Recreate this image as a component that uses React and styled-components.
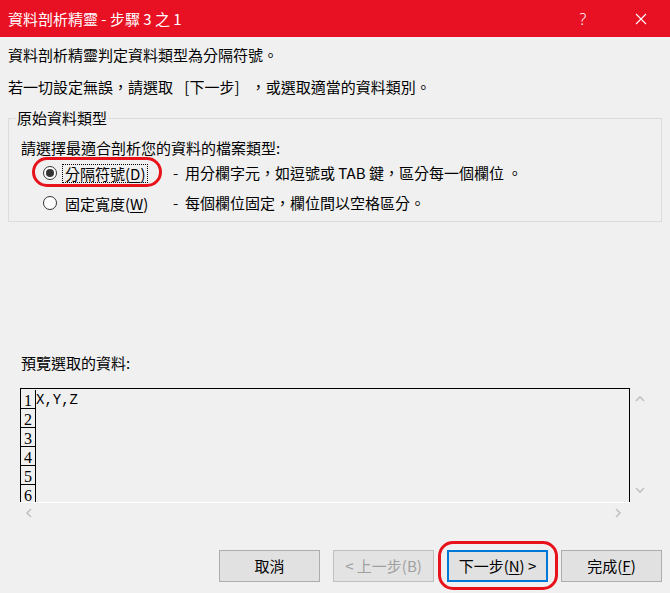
import React from 'react'
import styled, { createGlobalStyle, css } from 'styled-components'

const GlobalStyle = createGlobalStyle`
    html, body {
        margin: 0;
        padding: 0;
        background: #f0f0f0;
    }
    body {
        font-family: "Noto Sans CJK TC", "Noto Sans", sans-serif;
        font-size: 15px;
        color: #000;
        overflow: hidden;
    }
`;

const Window = styled.div`
    width: 670px;
    height: 593px;
    display: flex;
    flex-direction: column;
    background: #f0f0f0;
    overflow: hidden;
`;

const TitleBar = styled.div`
    height: 37px;
    flex-shrink: 0;
    display: flex;
    align-items: center;
    background: #e81123;
    color: #fff;
    padding-left: 8px;
`;

const Title = styled.span`
    flex: 1;
    line-height: 20px;
    white-space: pre;
`;

const TitleButton = styled.div`
    width: 58px;
    height: 37px;
    display: flex;
    align-items: center;
    justify-content: center;
    font-family: "Noto Sans", sans-serif;
    font-weight: 300;
    font-size: 16px;
`;

const Content = styled.div`
    flex: 1;
    display: flex;
    flex-direction: column;
    padding: 8px 8px 11px 8px;
`;

const Line = styled.p`
    margin: 0 0 12px;
    line-height: 20px;
    white-space: pre;
    word-spacing: ${p => p.wide ? '8px' : '0'};
`;

const Group = styled.fieldset`
    margin: -1px 0 0 0;
    padding: 10px 0 3px 0;
    border: 1px solid #dcdcdc;
    min-width: 0;
`;

const Legend = styled.legend`
    margin-left: 7px;
    padding: 0 1px;
    line-height: 20px;
`;

const Prompt = styled.div`
    padding-left: 12px;
    line-height: 20px;
`;

const RadioRow = styled.div`
    position: relative;
    display: flex;
    align-items: center;
    height: 30px;
    padding-left: 34px;
`;

const RadioCircle = styled.span`
    width: 14px;
    height: 14px;
    box-sizing: border-box;
    border-radius: 50%;
    border: 1px solid #333;
    background: #fff;
    display: flex;
    align-items: center;
    justify-content: center;
    flex-shrink: 0;

    &::after {
        content: '';
        width: 8px;
        height: 8px;
        border-radius: 50%;
        background: ${p => p.checked ? '#333' : 'transparent'};
    }
`;

const LabelCell = styled.div`
    width: 111px;
    margin-left: 5px;
    flex-shrink: 0;
`;

const LabelText = styled.span`
    display: inline-block;
    padding: 0 2px;
    line-height: 17px;
    border: 1px ${p => p.focused ? 'dotted #000' : 'solid transparent'};
`;

const Desc = styled.span`
    white-space: pre;
    line-height: 20px;
`;

const Mark = styled.u`
    text-decoration: underline;
    text-underline-offset: 2px;
`;

const RedRing = styled.div`
    position: absolute;
    left: ${p => p.left}px;
    top: ${p => p.top}px;
    width: ${p => p.width}px;
    height: ${p => p.height}px;
    box-sizing: border-box;
    border: 3px solid #e8121d;
    border-radius: 15px;
    pointer-events: none;
`;

const PreviewLabel = styled.div`
    margin-top: 131px;
    padding-left: 13px;
    line-height: 20px;
`;

const Preview = styled.div`
    margin: 15px 0 0 12px;
    display: grid;
    grid-template-columns: 610px 20px;
    grid-template-rows: 114px 20px;
`;

const ListBox = styled.div`
    box-sizing: border-box;
    border: 1px solid #000;
    border-bottom: none;
    padding-top: 1px;
    overflow: hidden;
`;

const DataRow = styled.div`
    display: flex;
    height: 19px;
`;

const RowNumber = styled.div`
    width: 14px;
    flex-shrink: 0;
    border-right: 1px solid #000;
    border-bottom: 1px solid #000;
    height: 18px;
    font-family: "Liberation Serif", serif;
    font-size: 16px;
    line-height: 21px;
    text-align: center;
    overflow: hidden;
`;

const RowData = styled.div`
    font-family: "Liberation Mono", monospace;
    font-size: 14px;
    line-height: 19px;
    padding-top: 1px;
`;

const VScroll = styled.div`
    display: flex;
    flex-direction: column;
    align-items: center;
    justify-content: space-between;
    padding: 7px 0 8px;
`;

const HScroll = styled.div`
    border-top: 1px solid #fff;
    display: flex;
    align-items: center;
    justify-content: space-between;
    padding: 0 8px 0 5px;
`;

const ButtonRow = styled.div`
    margin-top: auto;
    display: flex;
    justify-content: flex-end;
    gap: 13px;
`;

const ButtonWrap = styled.div`
    position: relative;
`;

const Button = styled.div`
    width: 101px;
    height: 32px;
    box-sizing: border-box;
    display: flex;
    align-items: center;
    justify-content: center;
    background: #e1e1e1;
    border: 1px solid #adadad;
    line-height: 20px;
    white-space: pre;

    ${p => p.disabled && css`
        color: #a0a0a0;
        border-color: #bfbfbf;
        background: #e3e3e3;
    `}

    ${p => p.primary && css`
        border: 2px solid #0078d7;
    `}
`;

const Chevron = ({ dir }) => {
    const pts = {
        up: '1,6 5,2 9,6',
        down: '1,2 5,6 9,2',
        left: '6,1 2,5 6,9',
        right: '2,1 6,5 2,9',
    }[dir];
    const vertical = dir === 'up' || dir === 'down';
    return (
        <svg width={vertical ? 10 : 8} height={vertical ? 8 : 10} viewBox={vertical ? '0 0 10 8' : '0 0 8 10'}>
            <polyline points={pts} fill="none" stroke="#c2c2c2" strokeWidth="1.6" />
        </svg>
    )
}

function App() {
    return (
        <Window>
            <GlobalStyle />
            <TitleBar>
                <Title>資料剖析精靈 - 步驟 3 之 1</Title>
                <TitleButton>?</TitleButton>
                <TitleButton>
                    <svg width="12" height="12" viewBox="0 0 12 12">
                        <path d="M1 1 L11 11 M11 1 L1 11" stroke="#fff" strokeWidth="1.1" />
                    </svg>
                </TitleButton>
            </TitleBar>
            <Content>
                <Line>資料剖析精靈判定資料類型為分隔符號。</Line>
                <Line wide>若一切設定無誤，請選取 [下一步] ，或選取適當的資料類別。</Line>
                <Group>
                    <Legend>原始資料類型</Legend>
                    <Prompt>請選擇最適合剖析您的資料的檔案類型:</Prompt>
                    <RadioRow>
                        <RadioCircle checked />
                        <LabelCell>
                            <LabelText focused>分隔符號(<Mark>D</Mark>)</LabelText>
                        </LabelCell>
                        <Desc>-  用分欄字元，如逗號或 TAB 鍵，區分每一個欄位 。</Desc>
                        <RedRing left={23} top={-1} width={130} height={30} />
                    </RadioRow>
                    <RadioRow>
                        <RadioCircle />
                        <LabelCell>
                            <LabelText>固定寬度(<Mark>W</Mark>)</LabelText>
                        </LabelCell>
                        <Desc>-  每個欄位固定，欄位間以空格區分。</Desc>
                    </RadioRow>
                </Group>
                <PreviewLabel>預覽選取的資料:</PreviewLabel>
                <Preview>
                    <ListBox>
                        {['X,Y,Z', '', '', '', '', ''].map((text, i) => (
                            <DataRow key={i}>
                                <RowNumber>{i + 1}</RowNumber>
                                <RowData>{text}</RowData>
                            </DataRow>
                        ))}
                    </ListBox>
                    <VScroll>
                        <Chevron dir="up" />
                        <Chevron dir="down" />
                    </VScroll>
                    <HScroll>
                        <Chevron dir="left" />
                        <Chevron dir="right" />
                    </HScroll>
                </Preview>
                <ButtonRow>
                    <Button>取消</Button>
                    <Button disabled>&lt; 上一步(B)</Button>
                    <ButtonWrap>
                        <Button primary>下一步(<Mark>N</Mark>) &gt;</Button>
                        <RedRing left={-9} top={-9} width={120} height={49} />
                    </ButtonWrap>
                    <Button>完成(<Mark>F</Mark>)</Button>
                </ButtonRow>
            </Content>
        </Window>
    )
}

export default App
